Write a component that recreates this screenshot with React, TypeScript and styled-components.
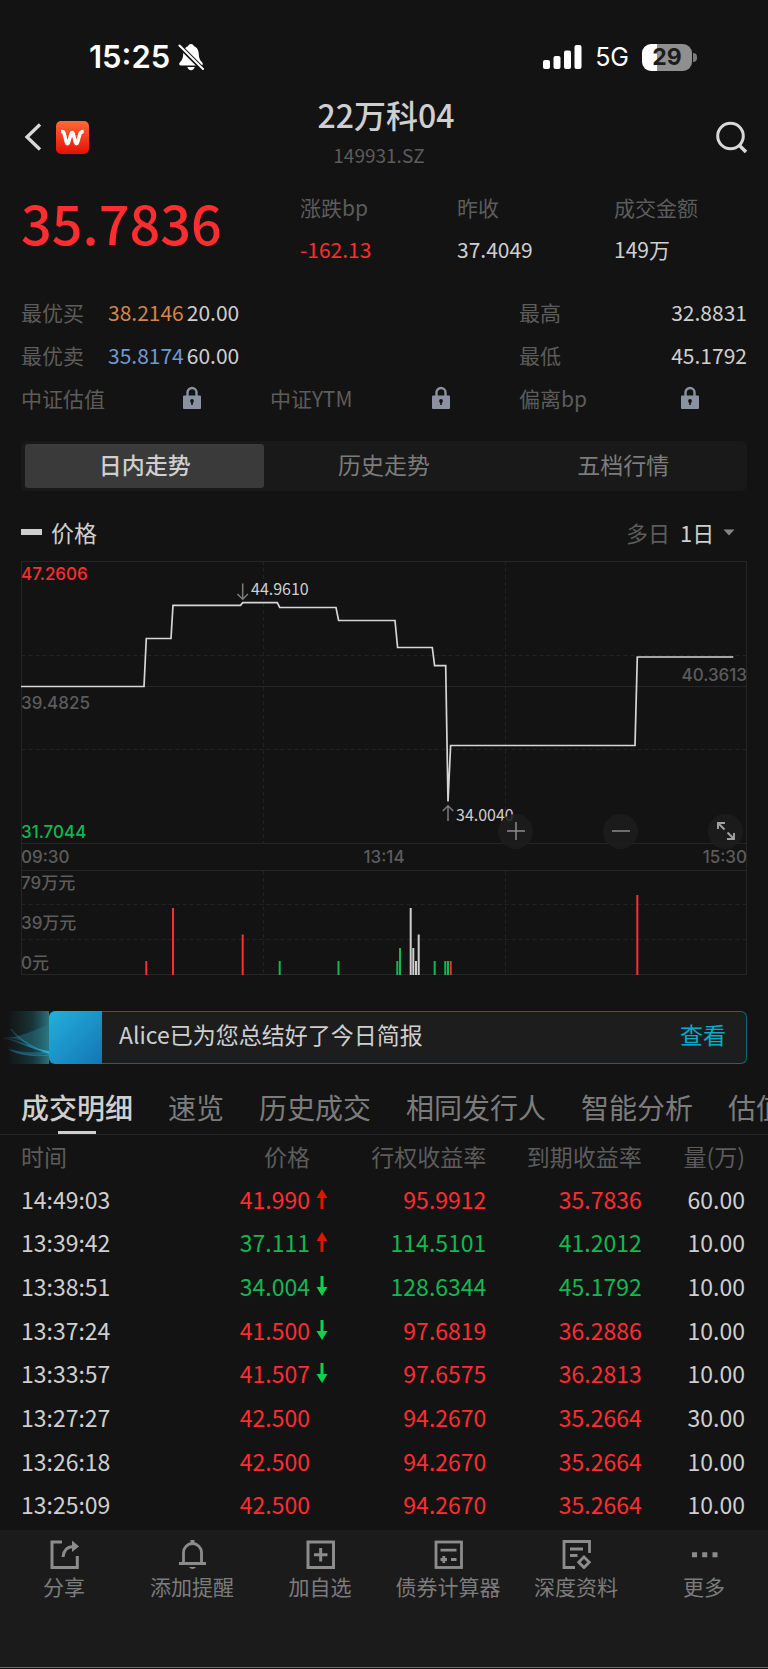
import React, { useState } from 'react';
import styled, { createGlobalStyle } from 'styled-components';

const c = {
  bg: '#131313',
  text: '#cfcfcf',
  muted: '#5c5c5c',
  mid: '#7c7c7c',
  red: '#ff2c30',
  green: '#12b850',
  orange: '#d2854a',
  blue: '#7199cf',
  line: '#262626',
};

const ui = `'Noto Sans CJK SC', sans-serif`;
const system = `Inter, 'Noto Sans CJK SC', sans-serif`;

const Global = createGlobalStyle`
  * { box-sizing: border-box; }
  body {
    margin: 0;
    background: ${c.bg};
    color: ${c.text};
    font-family: ${ui};
    font-weight: 400;
  }
  button, select {
    margin: 0;
    padding: 0;
    border: 0;
    background: none;
    color: inherit;
    font: inherit;
    cursor: pointer;
  }
  svg { display: block; }
`;

const Screen = styled.div`
  overflow: hidden;
`;

/* Status bar */
const StatusBar = styled.div`
  display: flex;
  justify-content: space-between;
  align-items: center;
  height: 90px;
  padding: 24px 71px 0 89px;
  color: #fff;
  font-family: ${system};
`;
const StatusGroup = styled.div<{ $gap: number }>`
  display: flex;
  align-items: center;
  gap: ${(p) => p.$gap}px;
`;
const Clock = styled.span`
  font-size: 31px;
  font-weight: 600;
  line-height: 36px;
`;
const Network = styled.span`
  font-size: 25px;
  font-weight: 400;
  line-height: 30px;
`;
const Battery = styled.div`
  display: flex;
  align-items: center;
  gap: 1px;
`;
const BatteryBody = styled.span`
  width: 50px;
  height: 27px;
  border-radius: 9px;
  background: linear-gradient(90deg, #fff 30%, #8f8f8f 30%);
  color: #1c1c1c;
  font-size: 23px;
  font-weight: 700;
  line-height: 27px;
  text-align: center;
`;
const BatteryTip = styled.span`
  width: 4px;
  height: 9px;
  border-radius: 0 4px 4px 0;
  background: #7a7a7a;
`;

/* Header */
const Header = styled.header`
  display: grid;
  grid-template-columns: 1fr auto 1fr;
  align-items: center;
  height: 94px;
  padding: 0 20px 0 24px;
`;
const HeaderSide = styled.div<{ $end?: boolean }>`
  display: flex;
  align-items: center;
  justify-content: ${(p) => (p.$end ? 'flex-end' : 'flex-start')};
  gap: 14px;
`;
const TitleBlock = styled.div`
  display: flex;
  flex-direction: column;
  gap: 7px;
  padding-bottom: 12px;
  text-align: center;
`;
const Title = styled.h1`
  margin: 0;
  font-size: 32px;
  font-weight: 500;
  line-height: 40px;
`;
const Code = styled.span`
  padding-right: 14px;
  color: ${c.muted};
  font-size: 19px;
  line-height: 28px;
`;

/* Quote */
const Content = styled.main`
  padding: 0 21px;
`;
const Quote = styled.section`
  display: grid;
  grid-template-columns: 279fr 157fr 157fr 133fr;
  padding-top: 8px;
`;
const Price = styled.strong`
  color: ${c.red};
  font-size: 54px;
  font-weight: 500;
  line-height: 60px;
`;
const Stat = styled.div`
  display: flex;
  flex-direction: column;
  gap: 12px;
  font-size: 21px;
  line-height: 30px;
`;
const Label = styled.span`
  color: ${c.muted};
`;
const Value = styled.span<{ $color?: string }>`
  color: ${(p) => p.$color || c.text};
`;
const Facts = styled.section`
  padding-top: 26px;
  font-size: 21px;
`;
const FactRow = styled.div`
  display: grid;
  grid-template-columns: repeat(3, 1fr);
  align-items: center;
  column-gap: 21px;
  height: 43px;
`;
const Book = styled.div`
  display: grid;
  grid-template-columns: 87px auto 1fr;
  grid-column: span 2;
  ${Value} + ${Value} { padding-left: 3px; }
`;
const HighLow = styled.div`
  display: flex;
  justify-content: space-between;
`;
const Locked = styled.div`
  display: grid;
  grid-template-columns: 1fr 1fr;
  align-items: center;
  svg { justify-self: center; }
`;

/* Segmented control */
const Segments = styled.div`
  display: grid;
  grid-template-columns: repeat(3, 1fr);
  margin-top: 22px;
  padding: 3px 4px;
  border-radius: 6px;
  background: #191919;
`;
const Segment = styled.button<{ $on: boolean }>`
  height: 44px;
  padding-bottom: 4px;
  border-radius: 3px;
  background: ${(p) => (p.$on ? '#3a3a3a' : 'transparent')};
  color: ${(p) => (p.$on ? c.text : c.mid)};
  font-size: 23px;
  font-weight: ${(p) => (p.$on ? 500 : 400)};
  line-height: 40px;
`;

/* Chart */
const Legend = styled.div`
  display: flex;
  align-items: center;
  justify-content: space-between;
  height: 40px;
  margin: 21px 0 9px;
  padding-right: 12px;
  font-size: 23px;
  line-height: 40px;
`;
const Series = styled.div`
  display: flex;
  align-items: center;
  gap: 9px;
  &::before {
    content: '';
    width: 21px;
    height: 6px;
    background: ${c.text};
  }
`;
const Range = styled.div`
  display: flex;
  align-items: center;
  font-size: 22px;
  label { padding-right: 10px; color: ${c.muted}; }
  select { appearance: none; outline: 0; }
  svg { margin-left: 8px; }
`;
const ChartWrap = styled.div`
  position: relative;
`;
const ChartSvg = styled.svg`
  width: 100%;
  height: auto;
  overflow: visible;
`;
const Controls = styled.div`
  position: absolute;
  top: 61%;
  right: 4px;
  display: flex;
  gap: 70px;
`;
const Round = styled.button`
  display: flex;
  align-items: center;
  justify-content: center;
  width: 35px;
  height: 35px;
  border-radius: 50%;
  background: rgba(28, 28, 28, 0.88);
`;

/* Briefing banner */
const Banner = styled.section`
  display: flex;
  height: 53px;
  margin: 36px 21px 0 0;
`;
const Tile = styled.div`
  width: 53px;
  border-radius: 6px 0 0 6px;
  background: linear-gradient(135deg, #24b0da, #1176b6);
`;
const BannerBody = styled.div`
  flex: 1;
  display: flex;
  align-items: center;
  justify-content: space-between;
  padding: 0 20px 7px 17px;
  border: 1px solid #0f6a74;
  border-left: 0;
  border-radius: 0 6px 6px 0;
  background: #1d1d1d;
  font-size: 23px;
  line-height: 40px;
  a { color: #08abc8; text-decoration: none; }
`;

/* Detail tabs */
const Tabs = styled.div`
  display: flex;
  gap: 35px;
  height: 71px;
  padding: 23px 0 0 21px;
  border-bottom: 1px solid ${c.line};
  overflow: hidden;
`;
const Tab = styled.button<{ $on: boolean }>`
  display: flex;
  flex: none;
  flex-direction: column;
  align-items: center;
  justify-content: space-between;
  height: 47px;
  color: ${(p) => (p.$on ? c.text : c.mid)};
  font-size: 28px;
  font-weight: ${(p) => (p.$on ? 500 : 400)};
  line-height: 40px;
  white-space: nowrap;
  &::after {
    content: '';
    width: 38px;
    height: 3px;
    background: ${(p) => (p.$on ? c.text : 'transparent')};
  }
`;

/* Trades */
const Trades = styled.table`
  width: 100%;
  height: 393px;
  border-collapse: collapse;
  table-layout: fixed;
  font-size: 23px;
  line-height: 32px;
  th, td { padding: 0 0 2px; font-weight: 400; text-align: right; white-space: nowrap; }
  th { height: 44px; color: ${c.muted}; }
  td { padding-bottom: 4px; }
  th:first-child, td:first-child { text-align: left; }
  th:nth-child(2) { padding-right: 18px; }
  th:last-child, td:last-child { padding-right: 2px; }
`;
const Col = styled.col<{ $share: number }>`
  width: ${(p) => p.$share}%;
`;
const Tick = styled.td<{ $color: string }>`
  color: ${(p) => p.$color};
`;
const PriceCell = styled.div`
  display: flex;
  align-items: center;
  justify-content: flex-end;
  gap: 6px;
`;
const ArrowSlot = styled.span`
  width: 12px;
`;

/* Bottom bar */
const Toolbar = styled.nav`
  display: grid;
  grid-template-columns: repeat(6, 1fr);
  align-items: start;
  height: 138px;
  margin-top: 2px;
  padding-top: 10px;
  border-bottom: 1px solid #707070;
  background: #1b1b1b;
`;
const Tool = styled.button`
  display: flex;
  flex-direction: column;
  align-items: center;
  gap: 2px;
  color: ${c.mid};
  font-size: 21px;
  line-height: 30px;
`;

const BellOff = () => (
  <svg width="26" height="28" viewBox="0 0 26 28" aria-hidden="true">
    <path d="M13 1c-1.7 0-2.7 1-3 2.300C6.600 4.500 5.400 7.500 5.200 11 5 15.500 3.900 17.300 2 19.300 .700 20.700 1 22.500 3 22.500h20c2 0 2.300-1.800 1-3.200-1.900-2-3-3.800-3.200-8.300-.200-3.500-1.400-6.500-4.800-7.700C15.700 2 14.700 1 13 1z" fill="#fff" />
    <path d="M9.300 24h7.400c-.500 2-1.900 3.200-3.700 3.200S9.800 26 9.300 24z" fill="#fff" />
    <path d="M1 2.500 25 26.500" stroke={c.bg} strokeWidth="4.600" />
    <path d="M1.500 2.500 25 26" stroke="#fff" strokeWidth="2" strokeLinecap="round" />
  </svg>
);
const Signal = () => (
  <svg width="39" height="26" viewBox="0 0 39 26" fill="#fff" aria-hidden="true">
    <rect x="0" y="16" width="7" height="9" rx="2" />
    <rect x="10.500" y="12" width="7" height="13" rx="2" />
    <rect x="21" y="6.500" width="7" height="18.500" rx="2" />
    <rect x="31.500" y="1" width="7" height="24" rx="2" />
  </svg>
);
const Back = () => (
  <svg width="18" height="28" viewBox="0 0 18 28" fill="none" stroke="#d8d8d8" strokeWidth="3.300" aria-hidden="true">
    <path d="M16 1.500 3 14l13 12.500" />
  </svg>
);
const Logo = () => (
  <svg width="33" height="33" viewBox="0 0 33 33" aria-hidden="true">
    <defs>
      <linearGradient id="logo" x1="0" y1="0" x2="0" y2="1">
        <stop offset="0" stopColor="#ff6a37" />
        <stop offset="1" stopColor="#e60f06" />
      </linearGradient>
    </defs>
    <rect width="33" height="33" rx="5" fill="url(#logo)" />
    <path d="M5 10.500h1.500c1 0 1.300.6 1.500 1.400l2.300 9.300c.5 1.900 1.700 1.900 2.200.2l2.700-8.900c.5-1.500 1.500-1.500 2 0l2.200 8.800c.5 1.800 1.700 1.800 2.200 0l2.200-8c.6-2 1.500-2.800 3.800-2.800" fill="none" stroke="#fff" strokeWidth="3.500" />
  </svg>
);
const Search = () => (
  <svg width="33" height="33" viewBox="0 0 33 33" fill="none" stroke="#d8d8d8" strokeWidth="3" aria-hidden="true">
    <circle cx="15.500" cy="15" r="12.800" />
    <path d="m24 24 7 7" strokeWidth="3.600" />
  </svg>
);
const Lock = () => (
  <svg width="18" height="23" viewBox="0 0 18 23" role="img" aria-label="锁定">
    <path d="M4.500 11V6.500a4.500 4.500 0 0 1 9 0V11" fill="none" stroke="#8a92a2" strokeWidth="2.400" />
    <rect y="9.500" width="18" height="13.500" rx="1" fill="#8a92a2" />
    <circle cx="9" cy="15" r="1.900" fill={c.bg} />
    <path d="M9 15v4" stroke={c.bg} strokeWidth="1.600" />
  </svg>
);

const AXIS = 413;
const PRICE_LINE =
  '0,125.500 123,125.500 125.300,77.500 150,77.500 152,44.300 219.500,44.300 221.700,41.700 256.300,41.700 258.700,46.500 315,46.500 317.600,59.500 374,59.500 376.600,86.500 411.300,86.500 413.600,104.700 424.700,104.700 427,240.500 429.600,184.500 614,184.500 616.300,96 712.300,96';
const BARS: [number, number, string][] = [
  [125.3, 400, c.red], [152, 347, c.red], [221.7, 373.5, c.red], [258.7, 400, c.green],
  [317.5, 400, c.green], [376.3, 400, c.green], [379, 387, c.green], [389.7, 347, c.text],
  [392.3, 387, c.text], [395, 400, c.text], [397.7, 373.5, c.text], [413.7, 400, c.green],
  [424.3, 400, c.green], [427, 400, c.green], [429.7, 400, c.red], [616.3, 334, c.red],
];

const Chart = () => (
  <ChartSvg viewBox="0 0 726 414" role="img" aria-label="价格走势">
    <g fill="none" stroke={c.line}>
      <path d="M.5 .5H725.500V413.500H.5ZM.5 125.500H725.500M.5 282.500H725.500M.5 309.500H725.500" />
      <path
        d="M.5 94.500H725M.5 188.500H725M.5 343.500H725M.5 378.500H725M242.500 0V282M484.500 0V282M242.500 310V413M484.500 310V413"
        stroke="#222"
        strokeDasharray="4 3"
      />
    </g>
    {BARS.map(([x, top, color]) => (
      <path key={x} d={`M${x} ${top}V${AXIS + 1}`} stroke={color} strokeWidth="2" />
    ))}
    <polyline points={PRICE_LINE} fill="none" stroke="#d6d6d6" strokeWidth="1.700" />
    <g fill="none" stroke={c.mid} strokeWidth="1.500">
      <path d="M221.700 22.500V38M216.500 33l5.200 5.200 5.200-5.200" />
      <path d="M427 260V245M421.800 250l5.200-5.200 5.200 5.200" />
    </g>
    <g fontFamily={ui} fontSize="16" fill={c.text}>
      <text x="230" y="34">44.9610</text>
      <text x="435" y="260">34.0040</text>
    </g>
    <g fontFamily={system} fontSize="17" fontWeight="500" fill={c.muted}>
      <text x="0" y="19" fill={c.red}>47.2606</text>
      <text x="0" y="148">39.4825</text>
      <text x="726" y="120" textAnchor="end">40.3613</text>
      <text x="0" y="277" fill={c.green}>31.7044</text>
      <text x="0" y="302">09:30</text>
      <text x="363" y="302" textAnchor="middle">13:14</text>
      <text x="726" y="302" textAnchor="end">15:30</text>
      <text x="0" y="328">79万元</text>
      <text x="0" y="368">39万元</text>
      <text x="0" y="408">0元</text>
    </g>
  </ChartSvg>
);

const Glow = () => (
  <svg width="49" height="53" viewBox="0 0 49 53" aria-hidden="true">
    <defs>
      <linearGradient id="halo" x1="0" x2="1">
        <stop offset=".15" stopColor="#1d5660" stopOpacity="0" />
        <stop offset=".65" stopColor="#1f5a63" stopOpacity=".45" />
        <stop offset="1" stopColor="#2d7f8a" stopOpacity=".9" />
      </linearGradient>
      <linearGradient id="wisp" x1="0" x2="1">
        <stop offset="0" stopColor="#1b7f9f" stopOpacity=".1" />
        <stop offset="1" stopColor="#2ab4dc" />
      </linearGradient>
    </defs>
    <rect width="49" height="53" fill="url(#halo)" />
    <path d="M3 26C18 28 30 20 49 14V41C32 36 20 27 3 26Z" fill="#27808e" opacity=".4" />
    <path d="M8 38C20 46 36 46 49 42V40C36 42 22 42 8 38Z" fill="#1f7ea8" opacity=".5" />
    <path d="M3 27C16 28 30 38 49 41M11 18C20 30 32 37 49 42" fill="none" stroke="url(#wisp)" strokeWidth="1.600" />
    <path d="M6 34C18 44 34 46 49 44" fill="none" stroke="url(#wisp)" strokeOpacity=".5" />
  </svg>
);

const Arrow = ({ up }: { up: boolean }) => (
  <svg width="12" height="20" viewBox="0 0 12 20" role="img" aria-label={up ? '升' : '降'}>
    <path
      d={up ? 'M6 0 11.500 9H7.500V20H4.500V9H.5Z' : 'M6 20 .5 11H4.500V0H7.500V11H11.500Z'}
      fill={up ? '#e01500' : '#0fd050'}
    />
  </svg>
);

const frame = { width: 29, height: 29, viewBox: '0 0 29 29', fill: 'none', stroke: '#8c8c8c', strokeWidth: 3, 'aria-hidden': true } as const;
const TOOLS: [string, React.ReactNode][] = [
  ['分享', <svg {...frame}><path d="M12 2H2V27.500H27.300V16" /><path d="M13 17C13.500 10.500 17 7 23 6.500" /><path d="M22 .500 29 6.500 22 12Z" fill="#8c8c8c" stroke="none" /></svg>],
  ['添加提醒', <svg {...frame} strokeWidth={2.8}><path d="M5.500 23.500V12.500a9 9 0 0 1 18 0V23.500M1 23.500H28" /><path d="M14.500 0V4" strokeWidth="4" /><path d="M11.500 27h6v1l-3 1-3-1z" fill="#8c8c8c" stroke="none" /></svg>],
  ['加自选', <svg {...frame}><rect x="2" y="2" width="25.500" height="25.500" /><path d="M14.700 8V21.500M8 14.700H21.500" /></svg>],
  ['债券计算器', <svg {...frame} strokeWidth={2.8}><rect x="2" y="2" width="25.500" height="25.500" /><path d="M6.500 10.200H22.500M6.500 19.500H13M9.800 16V23M17 19.500H22.500" /></svg>],
  ['深度资料', <svg {...frame} strokeWidth={2.8}><path d="M27.500 13V1.500H2V27.500H13M8 9H21M8 15.500H15.500" /><path d="M22 17 27.300 22.300 22 27.600 16.700 22.300Z" /></svg>],
  ['更多', <svg {...frame}><path d="M2 14.700H7M12.200 14.700H17.200M22.500 14.700H27.500" strokeWidth="5" /></svg>],
];

const ROWS: [string, string, string, string, string, string, string][] = [
  ['14:49:03', '41.990', 'up', '95.9912', '35.7836', '60.00', c.red],
  ['13:39:42', '37.111', 'up', '114.5101', '41.2012', '10.00', c.green],
  ['13:38:51', '34.004', 'down', '128.6344', '45.1792', '10.00', c.green],
  ['13:37:24', '41.500', 'down', '97.6819', '36.2886', '10.00', c.red],
  ['13:33:57', '41.507', 'down', '97.6575', '36.2813', '10.00', c.red],
  ['13:27:27', '42.500', '', '94.2670', '35.2664', '30.00', c.red],
  ['13:26:18', '42.500', '', '94.2670', '35.2664', '10.00', c.red],
  ['13:25:09', '42.500', '', '94.2670', '35.2664', '10.00', c.red],
];
const SHARES = [20, 22.3, 21.8, 21.4, 14.5];
const SEGMENTS = ['日内走势', '历史走势', '五档行情'];
const TABS = ['成交明细', '速览', '历史成交', '相同发行人', '智能分析', '估值'];

export default function App() {
  const [segment, setSegment] = useState(0);
  const [tab, setTab] = useState(0);
  return (
    <Screen>
      <Global />
      <StatusBar>
        <StatusGroup $gap={8}>
          <Clock>15:25</Clock>
          <BellOff />
        </StatusGroup>
        <StatusGroup $gap={13}>
          <Signal />
          <Network>5G</Network>
          <Battery>
            <BatteryBody>29</BatteryBody>
            <BatteryTip />
          </Battery>
        </StatusGroup>
      </StatusBar>

      <Header>
        <HeaderSide>
          <button aria-label="返回"><Back /></button>
          <Logo />
        </HeaderSide>
        <TitleBlock>
          <Title>22万科04</Title>
          <Code>149931.SZ</Code>
        </TitleBlock>
        <HeaderSide $end>
          <button aria-label="搜索"><Search /></button>
        </HeaderSide>
      </Header>

      <Content>
        <Quote>
          <Price>35.7836</Price>
          <Stat><Label>涨跌bp</Label><Value $color={c.red}>-162.13</Value></Stat>
          <Stat><Label>昨收</Label><Value>37.4049</Value></Stat>
          <Stat><Label>成交金额</Label><Value>149万</Value></Stat>
        </Quote>

        <Facts>
          <FactRow>
            <Book><Label>最优买</Label><Value $color={c.orange}>38.2146</Value><Value>20.00</Value></Book>
            <HighLow><Label>最高</Label><Value>32.8831</Value></HighLow>
          </FactRow>
          <FactRow>
            <Book><Label>最优卖</Label><Value $color={c.blue}>35.8174</Value><Value>60.00</Value></Book>
            <HighLow><Label>最低</Label><Value>45.1792</Value></HighLow>
          </FactRow>
          <FactRow>
            {['中证估值', '中证YTM', '偏离bp'].map((name) => (
              <Locked key={name}><Label>{name}</Label><Lock /></Locked>
            ))}
          </FactRow>
        </Facts>

        <Segments role="tablist">
          {SEGMENTS.map((name, i) => (
            <Segment key={name} role="tab" aria-selected={i === segment} $on={i === segment} onClick={() => setSegment(i)}>
              {name}
            </Segment>
          ))}
        </Segments>

        <Legend>
          <Series>价格</Series>
          <Range>
            <label htmlFor="days">多日</label>
            <select id="days" defaultValue="1"><option value="1">1日</option></select>
            <svg width="12" height="7" viewBox="0 0 12 7" aria-hidden="true"><path d="M.5 .5H11.500L6 6.500Z" fill="#858585" /></svg>
          </Range>
        </Legend>

        <ChartWrap>
          <Chart />
          <Controls>
            <Round aria-label="放大">
              <svg width="18" height="18" viewBox="0 0 18 18" stroke="#8c8c8c" strokeWidth="1.500"><path d="M9 0V18M0 9H18" /></svg>
            </Round>
            <Round aria-label="缩小">
              <svg width="18" height="18" viewBox="0 0 18 18" stroke="#8c8c8c" strokeWidth="1.500"><path d="M0 9H18" /></svg>
            </Round>
            <Round aria-label="全屏">
              <svg width="18" height="18" viewBox="0 0 18 18" fill="none" stroke="#a2a2a2" strokeWidth="1.900">
                <path d="M8 1H1V7M1 1 7.500 7.500M10 17H17V11M17 17 10.500 10.500" />
              </svg>
            </Round>
          </Controls>
        </ChartWrap>
      </Content>

      <Banner>
        <Glow />
        <Tile />
        <BannerBody>
          <span>Alice已为您总结好了今日简报</span>
          <a href="#briefing">查看</a>
        </BannerBody>
      </Banner>

      <Tabs role="tablist">
        {TABS.map((name, i) => (
          <Tab key={name} role="tab" aria-selected={i === tab} $on={i === tab} onClick={() => setTab(i)}>
            {name}
          </Tab>
        ))}
      </Tabs>

      <Content>
        <Trades>
          <colgroup>
            {SHARES.map((share, i) => <Col key={i} $share={share} />)}
          </colgroup>
          <thead>
            <tr><th>时间</th><th>价格</th><th>行权收益率</th><th>到期收益率</th><th>量(万)</th></tr>
          </thead>
          <tbody>
            {ROWS.map(([time, price, dir, exercise, maturity, size, color]) => (
              <tr key={time}>
                <td>{time}</td>
                <Tick $color={color}>
                  <PriceCell>{price}<ArrowSlot>{dir && <Arrow up={dir === 'up'} />}</ArrowSlot></PriceCell>
                </Tick>
                <Tick $color={color}>{exercise}</Tick>
                <Tick $color={color}>{maturity}</Tick>
                <td>{size}</td>
              </tr>
            ))}
          </tbody>
        </Trades>
      </Content>

      <Toolbar>
        {TOOLS.map(([name, icon]) => (
          <Tool key={name}>{icon}{name}</Tool>
        ))}
      </Toolbar>
    </Screen>
  );
}
